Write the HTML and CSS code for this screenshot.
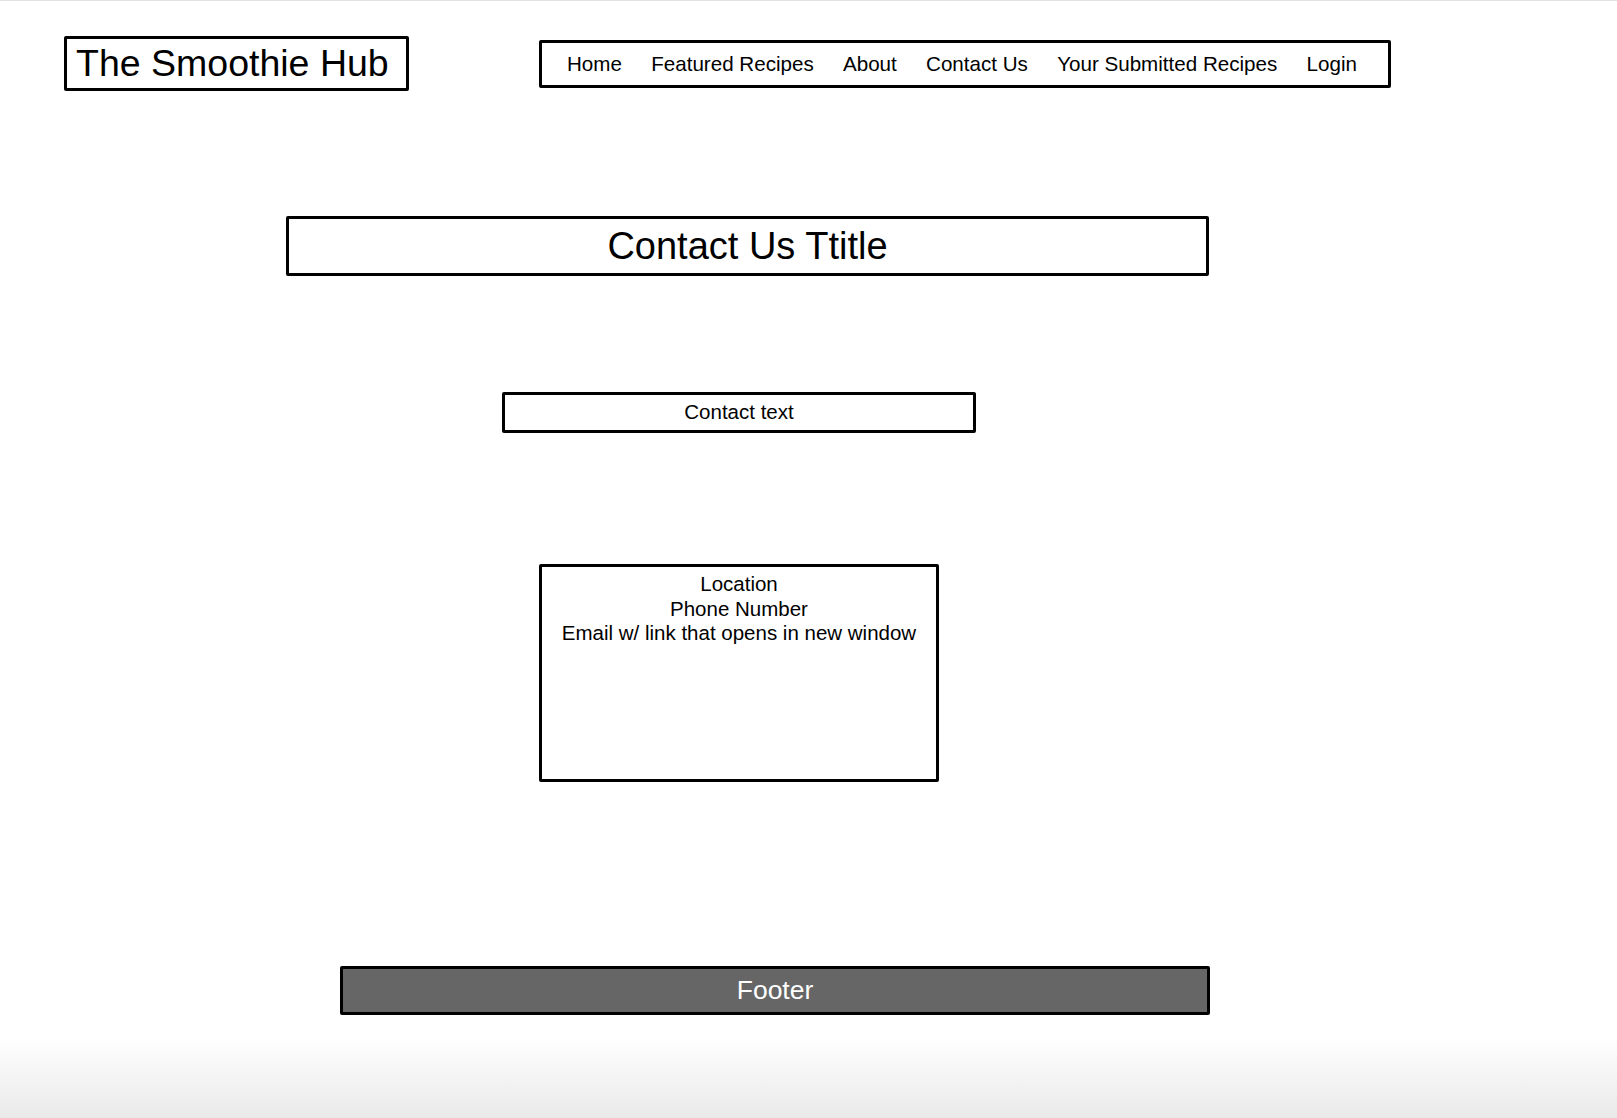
FILE: index.html
```html
<!DOCTYPE html>
<html lang="en">
<head>
<meta charset="utf-8">
<title>The Smoothie Hub - Contact Us</title>
<link rel="stylesheet" href="styles.css">
</head>
<body>
<header class="site-header">
  <div class="logo">The Smoothie Hub</div>
  <nav class="main-nav">
    <a href="#">Home</a>
    <a href="#">Featured Recipes</a>
    <a href="#">About</a>
    <a href="#">Contact Us</a>
    <a href="#">Your Submitted Recipes</a>
    <a href="#">Login</a>
  </nav>
</header>
<main class="content">
  <h1 class="page-title">Contact Us Ttitle</h1>
  <p class="contact-text">Contact text</p>
  <div class="contact-info">
    <div>Location</div>
    <div>Phone Number</div>
    <div>Email w/ link that opens in new window</div>
  </div>
  <footer class="site-footer">Footer</footer>
</main>
</body>
</html>
```

FILE: styles.css
```css
* {
  box-sizing: border-box;
}

html {
  min-height: 100%;
  background: linear-gradient(to bottom, #ffffff 0, #ffffff calc(100% - 80px), #e9e9e9 100%);
}

body {
  margin: 0;
  border-top: 1px solid #e2e2e2;
  font-family: "Liberation Sans", Arial, sans-serif;
  color: #000;
}

.site-header {
  display: flex;
  align-items: flex-start;
  gap: 130px;
  padding: 35px 0 0 64px;
}

.logo {
  width: 345px;
  height: 55px;
  border: 3px solid #000;
  border-radius: 2px;
  display: flex;
  align-items: center;
  padding-left: 9px;
  font-size: 37.5px;
  line-height: 1;
}

.main-nav {
  margin-top: 4px;
  width: 852px;
  height: 48px;
  border: 3px solid #000;
  border-radius: 2px;
  display: flex;
  align-items: center;
  justify-content: space-between;
  padding: 0 31px 0 25px;
}

.main-nav a {
  color: #000;
  text-decoration: none;
  font-size: 20.6px;
  line-height: 1;
}

.content {
  display: flex;
  flex-direction: column;
  align-items: flex-start;
}

.page-title {
  margin: 125px 0 0 286px;
  width: 923px;
  height: 60px;
  border: 3px solid #000;
  border-radius: 2px;
  display: flex;
  align-items: center;
  justify-content: center;
  font-size: 38px;
  font-weight: normal;
  line-height: 1;
}

.contact-text {
  margin: 116px 0 0 502px;
  width: 474px;
  height: 41px;
  border: 3px solid #000;
  border-radius: 2px;
  display: flex;
  align-items: center;
  justify-content: center;
  font-size: 20.5px;
  line-height: 1;
}

.contact-info {
  margin: 131px 0 0 539px;
  width: 400px;
  height: 218px;
  border: 3px solid #000;
  border-radius: 2px;
  padding-top: 5px;
  text-align: center;
  font-size: 20.5px;
  line-height: 24.7px;
}

.site-footer {
  margin: 184px 0 0 340px;
  width: 870px;
  height: 49px;
  border: 3px solid #000;
  border-radius: 2px;
  background: #666666;
  color: #fff;
  display: flex;
  align-items: center;
  justify-content: center;
  font-size: 26.5px;
  line-height: 1;
}
```
